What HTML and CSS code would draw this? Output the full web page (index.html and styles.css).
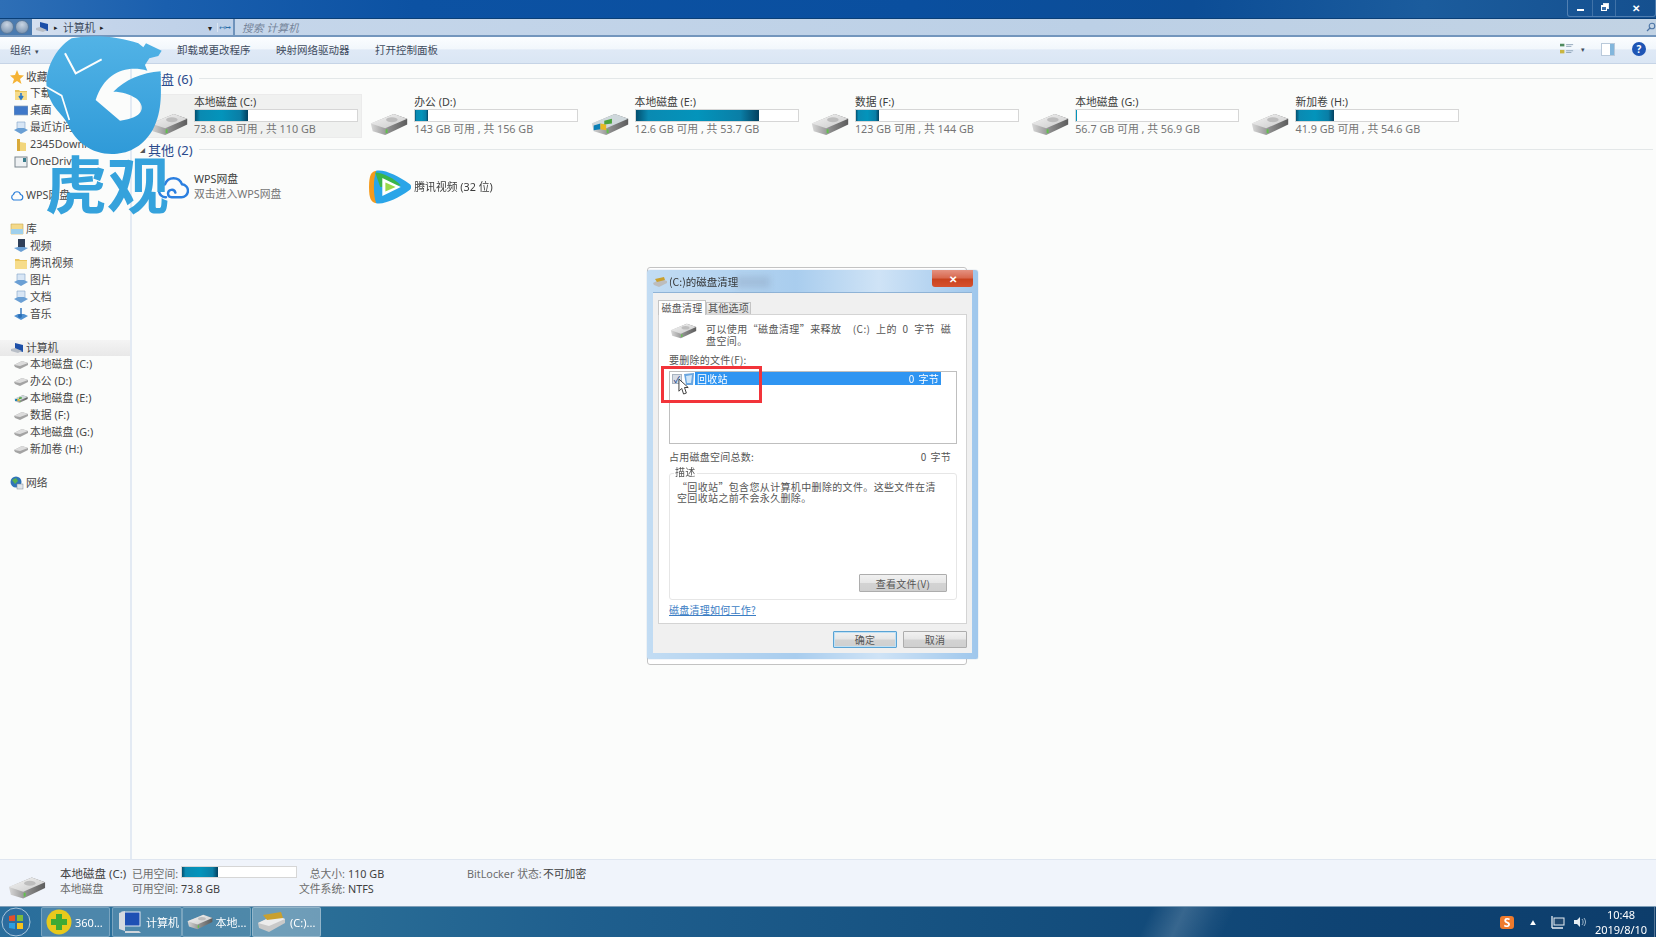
FILE: index.html
```html
<!DOCTYPE html>
<html lang="zh">
<head>
<meta charset="utf-8">
<title>计算机</title>
<link rel="stylesheet" href="styles.css">
</head>
<body>
<svg class="defs" width="0" height="0">
  <defs>
    <linearGradient id="hdTop" x1="0" y1="0" x2="1" y2="1"><stop offset="0" stop-color="#f4f4f4"/><stop offset="1" stop-color="#c9c9c9"/></linearGradient>
    <linearGradient id="hdSide" x1="0" y1="0" x2="1" y2="0"><stop offset="0" stop-color="#d8d8d8"/><stop offset=".5" stop-color="#8d8d8d"/><stop offset="1" stop-color="#5c5c5c"/></linearGradient>
    <linearGradient id="logoG" x1="0" y1="0" x2="0" y2="1"><stop offset="0" stop-color="#52b3e6"/><stop offset="1" stop-color="#2f9ad8"/></linearGradient>
    <symbol id="hd" viewBox="0 0 40 24">
      <path d="M1 11 L25 1 L39 6 L39 12 L16 23 L3 19 Z" fill="url(#hdSide)"/>
      <path d="M1 11 L25 1 L39 6 L16 16 Z" fill="url(#hdTop)"/>
      <ellipse cx="23" cy="7" rx="6" ry="2.6" fill="#bdbdbd"/>
      <rect x="16.5" y="17" width="2" height="4" fill="#5fc24a"/>
    </symbol>
    <symbol id="hdwin" viewBox="0 0 40 24">
      <path d="M1 11 L25 1 L39 6 L39 12 L16 23 L3 19 Z" fill="url(#hdSide)"/>
      <path d="M1 11 L25 1 L39 6 L16 16 Z" fill="#cfd8dc"/>
      <path d="M3 13 L10 11 L10 17 L3 18Z" fill="#0b7fb5"/>
      <path d="M10 11 L16 12 L16 18 L10 17Z" fill="#e8b923"/>
      <path d="M14 8 L22 6 L22 11 L14 12Z" fill="#4aa33d"/>
      <rect x="16.5" y="17" width="2" height="4" fill="#5fc24a"/>
    </symbol>
    <symbol id="folder" viewBox="0 0 14 14"><path d="M1 3h4l1 1h7v9H1z" fill="#e9c45c"/><path d="M1 5h12v8H1z" fill="#f6dc8a"/></symbol>
    <symbol id="minihd" viewBox="0 0 14 10"><path d="M0 5 L8 1 L14 3 L14 5 L6 9 L1 7Z" fill="#a3a3a3"/><path d="M0 5 L8 1 L14 3 L6 6Z" fill="#dcdcdc"/></symbol>
    <symbol id="pc" viewBox="0 0 14 14"><path d="M5 2 L13 4 L13 11 L5 9Z" fill="#1c4fa8"/><path d="M1 8 L5 7 L12 10 L8 12 L1 10Z" fill="#b8bec6"/></symbol>
    <symbol id="libdoc" viewBox="0 0 14 14"><path d="M3 1h8v8H3z" fill="#d8e6f5" stroke="#7fa3c7" stroke-width=".6"/><path d="M0 9 L7 13 L14 9 L10 7 L4 7Z" fill="#6a9fd4"/></symbol>
  </defs>
</svg>

<div class="screen">
  <header class="titlebar">
    <div class="caption">
      <span class="cap-btn cap-min"><i></i></span>
      <span class="cap-btn cap-max"><i></i></span>
      <span class="cap-btn cap-close">✕</span>
    </div>
  </header>

  <div class="addressbar">
    <div class="navbtns"><i></i><i></i></div>
    <div class="address">
      <svg class="icon14" viewBox="0 0 14 14"><use href="#pc"/></svg>
      <span class="arrow">▸</span><span>计算机</span><span class="arrow">▸</span>
      <span class="addr-drop">▾</span><span class="addr-ref">↤↦</span>
    </div>
    <div class="search">
      <span>搜索 计算机</span>
      <svg class="search-ic" viewBox="0 0 10 10"><circle cx="6" cy="4" r="2.8" fill="none" stroke="#4e76a6" stroke-width="1.1"/><path d="M4 6 L1 9" stroke="#4e76a6" stroke-width="1.3"/></svg>
    </div>
  </div>

  <div class="toolbar">
    <span class="tb-item tb-org">组织<b>▾</b></span>
    <span class="tb-item tb-sys">系统属性</span>
    <span class="tb-item tb-a">卸载或更改程序</span>
    <span class="tb-item tb-b">映射网络驱动器</span>
    <span class="tb-item tb-c">打开控制面板</span>
    <span class="tb-right">
      <svg class="tb-view" viewBox="0 0 16 12"><rect x="0" y="0" width="5" height="3" fill="#4f8a5f"/><rect x="0" y="7" width="5" height="4" fill="#c9b640"/><path d="M7 1h8M7 3h6M7 8h8M7 10h6" stroke="#8aa0b6"/></svg>
      <b class="tb-caret">▾</b>
      <span class="tb-pane"></span>
      <span class="tb-help">?</span>
    </span>
  </div>

  <div class="explorer">
    <nav class="sidebar">
      <ul class="navgroup">
        <li class="nav-head"><svg class="icon14" viewBox="0 0 14 14"><path d="M7 0 L9 5 L14 5.5 L10 9 L11.5 14 L7 11 L2.5 14 L4 9 L0 5.5 L5 5Z" fill="#f5b335"/></svg>收藏夹</li>
        <li class="nav-child"><svg class="icon14" viewBox="0 0 14 14"><use href="#folder"/><path d="M7 6v5M5 9l2 3 2-3" stroke="#2a78c8" stroke-width="1.6" fill="none"/></svg>下载</li>
        <li class="nav-child"><svg class="icon14" viewBox="0 0 14 14"><rect x="0" y="2" width="14" height="9" fill="#3f78c9" stroke="#8aa0b8" stroke-width=".7"/></svg>桌面</li>
        <li class="nav-child"><svg class="icon14" viewBox="0 0 14 14"><use href="#libdoc"/></svg>最近访问的位置</li>
        <li class="nav-child"><svg class="icon14" viewBox="0 0 14 14"><path d="M3 1h3v12H3z" fill="#d9aa3a"/><path d="M6 4l6 1v8H6z" fill="#f2d67c"/></svg>2345Downloads</li>
        <li class="nav-child"><svg class="icon14" viewBox="0 0 14 14"><rect x="1" y="2" width="12" height="10" fill="#eef1f3" stroke="#7b858e"/><rect x="9" y="3" width="3" height="4" fill="#3a7d8c"/></svg>OneDrive</li>
      </ul>
      <ul class="navgroup">
        <li class="nav-head"><svg class="icon14" viewBox="0 0 14 14"><path d="M3.5 11 A3 3 0 0 1 3.5 5.5 A3.6 3.6 0 0 1 10.5 5.5 A2.8 2.8 0 0 1 10.5 11 Z" fill="none" stroke="#2b7fd9" stroke-width="1.2"/></svg>WPS网盘</li>
      </ul>
      <ul class="navgroup">
        <li class="nav-head"><svg class="icon14" viewBox="0 0 14 14"><path d="M1 2h12v10H1z" fill="#f3d98a" stroke="#c9a94f" stroke-width=".6"/><path d="M1 7h12v5H1z" fill="#9fd0ec"/></svg>库</li>
        <li class="nav-child"><svg class="icon14" viewBox="0 0 14 14"><rect x="4" y="0" width="7" height="9" fill="#2f3f58"/><path d="M0 9 L7 13 L14 9 L10 8 L4 8Z" fill="#6a9fd4"/></svg>视频</li>
        <li class="nav-child"><svg class="icon14" viewBox="0 0 14 14"><use href="#folder"/></svg>腾讯视频</li>
        <li class="nav-child"><svg class="icon14" viewBox="0 0 14 14"><use href="#libdoc"/></svg>图片</li>
        <li class="nav-child"><svg class="icon14" viewBox="0 0 14 14"><use href="#libdoc"/></svg>文档</li>
        <li class="nav-child"><svg class="icon14" viewBox="0 0 14 14"><path d="M0 9 L7 13 L14 9 L10 7 L4 7Z" fill="#4f90d0"/><path d="M7 1v8" stroke="#2a6fb8" stroke-width="1.4"/><circle cx="6" cy="9" r="2" fill="#2a6fb8"/></svg>音乐</li>
      </ul>
      <ul class="navgroup">
        <li class="nav-head nav-current"><svg class="icon14" viewBox="0 0 14 14"><use href="#pc"/></svg>计算机</li>
        <li class="nav-child"><svg class="icon14" viewBox="0 0 14 10"><use href="#minihd"/></svg>本地磁盘 (C:)</li>
        <li class="nav-child"><svg class="icon14" viewBox="0 0 14 10"><use href="#minihd"/></svg>办公 (D:)</li>
        <li class="nav-child"><svg class="icon14" viewBox="0 0 14 14"><use href="#hdwin"/></svg>本地磁盘 (E:)</li>
        <li class="nav-child"><svg class="icon14" viewBox="0 0 14 10"><use href="#minihd"/></svg>数据 (F:)</li>
        <li class="nav-child"><svg class="icon14" viewBox="0 0 14 10"><use href="#minihd"/></svg>本地磁盘 (G:)</li>
        <li class="nav-child"><svg class="icon14" viewBox="0 0 14 10"><use href="#minihd"/></svg>新加卷 (H:)</li>
      </ul>
      <ul class="navgroup">
        <li class="nav-head"><svg class="icon14" viewBox="0 0 14 14"><circle cx="6" cy="6" r="5.5" fill="#2f74b8"/><path d="M2 4 L6 2 L8 5 L5 8Z" fill="#58b04f"/><rect x="7" y="8" width="6" height="5" fill="#dfe5ea" stroke="#7d8894" stroke-width=".5"/></svg>网络</li>
      </ul>
    </nav>

    <main class="content">
      <section class="group">
        <h2 class="group-head"><span class="tri">◢</span><span>硬盘 (6)</span><i></i></h2>
        <div class="tiles">
          <div class="tile tile-sel">
            <svg class="hd"><use href="#hd"/></svg>
            <div class="tile-text"><div class="t-name">本地磁盘 (C:)</div><div class="bar"><div class="fill" style="width:33%"></div></div><div class="t-sub">73.8 GB 可用 , 共 110 GB</div></div>
          </div>
          <div class="tile">
            <svg class="hd"><use href="#hd"/></svg>
            <div class="tile-text"><div class="t-name">办公 (D:)</div><div class="bar"><div class="fill" style="width:8%"></div></div><div class="t-sub">143 GB 可用 , 共 156 GB</div></div>
          </div>
          <div class="tile">
            <svg class="hd"><use href="#hdwin"/></svg>
            <div class="tile-text"><div class="t-name">本地磁盘 (E:)</div><div class="bar"><div class="fill" style="width:76%"></div></div><div class="t-sub">12.6 GB 可用 , 共 53.7 GB</div></div>
          </div>
          <div class="tile">
            <svg class="hd"><use href="#hd"/></svg>
            <div class="tile-text"><div class="t-name">数据 (F:)</div><div class="bar"><div class="fill" style="width:14%"></div></div><div class="t-sub">123 GB 可用 , 共 144 GB</div></div>
          </div>
          <div class="tile">
            <svg class="hd"><use href="#hd"/></svg>
            <div class="tile-text"><div class="t-name">本地磁盘 (G:)</div><div class="bar"><div class="fill" style="width:0.4%"></div></div><div class="t-sub">56.7 GB 可用 , 共 56.9 GB</div></div>
          </div>
          <div class="tile">
            <svg class="hd"><use href="#hd"/></svg>
            <div class="tile-text"><div class="t-name">新加卷 (H:)</div><div class="bar"><div class="fill" style="width:23%"></div></div><div class="t-sub">41.9 GB 可用 , 共 54.6 GB</div></div>
          </div>
        </div>
      </section>
      <section class="group group-other">
        <h2 class="group-head"><span class="tri">◢</span><span>其他 (2)</span><i></i></h2>
        <div class="tiles">
          <div class="tile tile-app">
            <svg class="app-cloud" viewBox="0 0 32 30"><path d="M8 26 A7 7 0 0 1 7 12 A9.5 9.5 0 0 1 25 12 A7 7 0 0 1 24 26 H14 A4 4 0 1 1 18 21" fill="none" stroke="#2b7fe0" stroke-width="2.6" stroke-linecap="round"/></svg>
            <div class="tile-text"><div class="t-name">WPS网盘</div><div class="t-sub">双击进入WPS网盘</div></div>
          </div>
          <div class="tile tile-app tile-tx">
            <svg class="app-tx" viewBox="0 0 42 42" preserveAspectRatio="none"><path d="M8 3 C3 4 1 8 1 21 C1 34 3 38 8 39 L16 21Z" fill="#f59a1c"/><path d="M8 3 C16 1 30 9 40 17 C43 19 43 23 40 25 C30 33 16 41 8 39 C5 30 5 12 8 3Z" fill="#2aa5e8"/><path d="M7 5 C14 5 26 12 32 19 L12 21Z" fill="#39b54a"/><path d="M14 11 L32 21 L14 31Z" fill="#fff"/><path d="M17 16 L27 21 L17 26Z" fill="#9ad84a"/></svg>
            <div class="t-name">腾讯视频 (32 位)</div>
          </div>
        </div>
      </section>
    </main>
  </div>

  <div class="details">
    <svg class="details-hd"><use href="#hd"/></svg>
    <div class="d-col d-name"><div class="d-dark d-title">本地磁盘 (C:)</div><div>本地磁盘</div></div>
    <div class="d-col d-used"><div>已用空间:</div><div>可用空间:</div></div>
    <div class="d-col d-usedv"><div class="bar bar-d"><div class="fill" style="width:32%"></div></div><div class="d-dark">73.8 GB</div></div>
    <div class="d-col d-size"><div>总大小:</div><div>文件系统:</div></div>
    <div class="d-col d-sizev d-dark"><div>110 GB</div><div>NTFS</div></div>
    <div class="d-col d-bl"><div>BitLocker 状态:</div></div>
    <div class="d-col d-dark"><div>不可加密</div></div>
  </div>

  <footer class="taskbar">
    <svg class="orb" viewBox="0 0 30 30">
      <circle cx="15" cy="15" r="14" fill="#2c6c9e" stroke="#a9c6dc" stroke-width="1"/>
      <path d="M8 9 L14 8 L14 14 L8 14Z" fill="#e2502b"/><path d="M16 8 L22 8 L22 14 L16 14Z" fill="#7dbb3c"/><path d="M8 16 L14 16 L14 22 L8 21Z" fill="#2c9ee0"/><path d="M16 16 L22 16 L22 22 L16 22Z" fill="#f6c21c"/>
    </svg>
    <div class="task task-1">
      <svg class="task-ic" viewBox="0 0 26 26"><circle cx="13" cy="13" r="12.5" fill="#e8c91c"/><path d="M10 5h6v5h5v6h-5v5h-6v-5H5v-6h5z" fill="#3eaa35"/></svg><span>360...</span>
    </div>
    <div class="task-pair">
      <div class="task task-2">
        <svg class="task-ic" viewBox="0 0 26 26"><rect x="5" y="3" width="18" height="14" fill="#1e50b4" stroke="#dfe6ee"/><path d="M2 4 L8 2 L8 22 L2 20Z" fill="#d5dae0"/><path d="M8 22h14l2 2H8z" fill="#cfd5db"/></svg><span>计算机</span>
      </div>
      <div class="task task-2">
        <svg class="task-hd"><use href="#hd"/></svg><span>本地...</span>
      </div>
    </div>
    <div class="task task-3">
      <svg class="task-ic task-ic-w" viewBox="0 0 30 24"><path d="M1 13 L18 5 L28 9 L28 13 L12 22 L2 18Z" fill="#c9c9c9"/><path d="M1 13 L18 5 L28 9 L12 16Z" fill="#ececec"/><path d="M6 5 L24 2 L26 8 L10 10Z" fill="#c9a02f"/></svg><span>(C:)...</span>
    </div>
    <div class="tray">
      <span class="tray-s">S</span>
      <span class="tray-up">▲</span>
      <svg class="tray-net" viewBox="0 0 14 14"><rect x="3" y="3" width="10" height="7" fill="#20486f" stroke="#e6edf3"/><path d="M1 1v12M1 13h11" stroke="#e6edf3" stroke-width="1.3"/></svg>
      <svg class="tray-vol" viewBox="0 0 14 14"><path d="M1 5h3l3-3v10L4 9H1z" fill="#e6edf3"/><path d="M9 4 C10.5 6 10.5 8 9 10M11 3 C13 6 13 8 11 11" stroke="#9fb6ca" fill="none"/></svg>
      <div class="clock"><div>10:48</div><div>2019/8/10</div></div>
      <span class="show-desktop"></span>
    </div>
  </footer>

  <div class="back-frame"></div>

  <section class="dialog">
    <div class="dlg-title">
      <svg class="dlg-ic" viewBox="0 0 14 12"><path d="M0 7 L8 3 L14 5 L14 7 L6 11 L1 9Z" fill="#bdbdbd"/><path d="M2 3 L11 1 L12 4 L4 6Z" fill="#c9a02f"/></svg>
      <span>(C:)的磁盘清理</span>
      <span class="dlg-smear"></span>
      <span class="dlg-close">✕</span>
    </div>
    <div class="dlg-frame">
      <div class="tabs"><span class="tab tab-on">磁盘清理</span><span class="tab">其他选项</span></div>
      <div class="panel">
        <div class="intro">
          <svg class="intro-hd"><use href="#hd"/></svg>
          <p>可以使用“磁盘清理”来释放 &nbsp;(C:) 上的 0 字节 磁<br>盘空间。</p>
        </div>
        <div class="lbl lbl-files">要删除的文件(F):</div>
        <div class="list">
          <div class="row">
            <span class="check">✓</span>
            <svg class="bin" viewBox="0 0 12 14"><path d="M1 2 L11 1 L10 13 L3 13Z" fill="#6aa6e0"/><path d="M3 4 L9 3 L8 11 L4 11Z" fill="#cfe5f8"/></svg>
            <div class="sel"><span>回收站</span><span>0 字节</span></div>
          </div>
          <div class="redbox"></div>
          <svg class="cursor" viewBox="0 0 14 20"><path d="M1 1 L1 14 L4 11 L6 17 L9 16 L7 10 L11 10Z" fill="#fff" stroke="#333" stroke-width="1"/></svg>
        </div>
        <div class="lbl lbl-total"><span>占用磁盘空间总数:</span><span>0 字节</span></div>
        <fieldset class="desc">
          <span class="legend">描述</span>
          <p>“回收站”包含您从计算机中删除的文件。这些文件在清<br>空回收站之前不会永久删除。</p>
          <span class="btn btn-view">查看文件(V)</span>
        </fieldset>
        <a class="howto">磁盘清理如何工作?</a>
      </div>
      <div class="dlg-actions"><span class="btn btn-act btn-def">确定</span><span class="btn btn-act">取消</span></div>
    </div>
  </section>

  <div class="logo">
    <svg class="logo-mark" viewBox="0 0 510 585">
      <path fill="url(#logoG)" d="M125 25 C190 12 270 20 325 40 L340 52 L348 40 L395 62 L385 78 L358 85 L345 105 L352 122 C290 105 225 125 197 210 L270 272 C340 265 350 230 318 205 C300 192 275 185 250 185 C285 150 335 128 392 124 C392 180 400 240 368 300 C335 355 290 372 245 372 C185 372 135 335 115 285 C95 245 60 235 50 170 C45 120 75 55 125 25 Z"/>
      <path d="M105 70 L137 130 L215 88" fill="none" stroke="#fbfdfd" stroke-width="6"/>
      <path d="M48 170 L95 197 L118 270" fill="none" stroke="#fbfdfd" stroke-width="5"/>
    </svg>
    <span class="logo-text">虎观</span>
  </div>
</div>
</body>
</html>
```

FILE: styles.css
```css
* { box-sizing: border-box; }
html, body { margin: 0; padding: 0; }
body { width: 1656px; height: 937px; overflow: hidden; background: #fff; }
.defs { position: absolute; }
ul { list-style: none; margin: 0; padding: 0; }
p, h2 { margin: 0; }

.screen {
  position: relative;
  width: 1656px;
  height: 937px;
  display: flex;
  flex-direction: column;
  font-family: "Noto Sans", "Noto Sans CJK SC", sans-serif;
  font-size: 10.8px;
  color: #444;
  filter: blur(.45px);
  overflow: hidden;
}

/* window chrome */
.titlebar {
  height: 19px;
  flex: none;
  display: flex;
  justify-content: flex-end;
  background: linear-gradient(90deg, #2e6fb6 0, #1a5fae 10%, #0c52a3 25%, #0a4f9f 55%, #0c4d96 72%, #1b5c9d 86%, #15508f 100%);
  border-bottom: 1px solid #0a3f77;
}
.caption {
  width: 89px;
  height: 17px;
  display: flex;
  border: 1px solid rgba(190, 210, 235, .35);
  border-top: 0;
  border-radius: 0 0 3px 3px;
}
.cap-btn {
  display: flex;
  align-items: center;
  justify-content: center;
  color: #fff;
  font-size: 10px;
  font-weight: 700;
  border-right: 1px solid rgba(190, 210, 235, .25);
}
.cap-min { width: 25px; }
.cap-max { width: 23px; }
.cap-close { flex: 1; border-right: 0; }
.cap-min i { width: 7px; height: 2px; margin-top: 4px; background: #fff; }
.cap-max i { width: 6px; height: 6px; border: 1px solid #fff; border-top-width: 2px; box-shadow: 2px -2px 0 -1px #fff, 2px -2px 0 0 #dfe8f2; background: #3a6ea8; }

.addressbar {
  height: 18px;
  flex: none;
  display: flex;
  align-items: stretch;
  background: #bdd1e7;
  border-bottom: 2px solid #7396bd;
}
.navbtns {
  width: 32px;
  flex: none;
  display: flex;
  gap: 1px;
  align-items: center;
  background: #4a7bb0;
}
.navbtns i {
  width: 14px;
  height: 14px;
  border-radius: 50%;
  background: radial-gradient(circle at 50% 30%, #c9d5e3, #6f8aa8);
  border: 1px solid #5b7a9c;
}
.address {
  width: 201px;
  flex: none;
  display: flex;
  align-items: center;
  gap: 5px;
  padding-left: 3px;
  color: #3c4a5c;
  background: linear-gradient(90deg, #d5e0ef, #c3d4ea 40%, #bdd0e8);
}
.arrow { font-size: 7px; color: #222; }
.addr-drop { margin-left: auto; font-size: 8px; color: #222; }
.addr-ref { width: 16px; padding-left: 1px; font-size: 7px; color: #2a6ea8; border-left: 1px solid #dbe5f1; white-space: nowrap; overflow: hidden; }
.search {
  flex: 1;
  display: flex;
  align-items: center;
  justify-content: space-between;
  padding: 0 0 0 7px;
  border-left: 2px solid #6f93bb;
  font-style: italic;
  color: #76859a;
  background: linear-gradient(90deg, #c5d6ea, #bcd0e6 60%, #c2d3e4);
}
.search-ic { width: 10px; height: 10px; }

.toolbar {
  height: 27px;
  flex: none;
  display: flex;
  align-items: center;
  padding-bottom: 2px;
  background: linear-gradient(180deg, #fbfdff 0, #f2f7fc 45%, #dfe9f6 50%, #dae6f4 100%);
  border-bottom: 1px solid #c6d4e6;
  color: #3f4c5e;
}
.tb-item { font-size: 10.5px; white-space: nowrap; }
.tb-org { margin-left: 10px; width: 52px; }
.tb-org b { font-size: 7px; margin-left: 4px; font-weight: 400; }
.tb-sys { width: 115px; }
.tb-a { width: 99px; }
.tb-b { width: 99px; }
.tb-right { margin-left: auto; display: flex; align-items: center; }
.tb-view { width: 14px; height: 12px; }
.tb-caret { margin: 0 16px 0 7px; font-size: 7px; font-weight: 400; }
.tb-pane { width: 14px; height: 13px; margin-right: 17px; background: linear-gradient(90deg, #fff 65%, #82b6dc 65%); border: 1px solid #b9c9da; }
.tb-help {
  width: 14px;
  height: 14px;
  margin-right: 10px;
  border-radius: 50%;
  background: #1e55b5;
  color: #fff;
  font-size: 10px;
  font-weight: 700;
  line-height: 14px;
  text-align: center;
}

/* explorer body */
.explorer { flex: 1; min-height: 0; display: flex; background: #fbfcfb; }
.sidebar { width: 132px; flex: none; padding-top: 4.5px; border-right: 2px solid #e3eaf3; }
.navgroup { margin-bottom: 16.95px; }
.navgroup li { height: 16.95px; display: flex; align-items: center; gap: 2px; white-space: nowrap; line-height: 16.95px; color: #474747; }
.icon14 { width: 14px; height: 14px; flex: none; }
.nav-head { padding-left: 10px; }
.nav-child { padding-left: 14px; }
.nav-current { background: linear-gradient(180deg, #f4f4f4, #e8e8e8); }

.content { flex: 1; min-width: 0; padding: 6px 3px 0 8px; }
.group-head {
  height: 16px;
  display: flex;
  align-items: center;
  font-size: 13px;
  font-weight: 400;
  color: #2a4a8c;
  white-space: nowrap;
}
.tri { width: 8px; font-size: 5px; color: #555; }
.group-head i { flex: 1; height: 1px; margin-left: 6px; background: #e3e7e8; }
.tiles { display: grid; grid-template-columns: repeat(6, 220.3px); margin-top: 8px; }
.group-other { margin-top: 3px; }
.group-other .tiles { margin-top: 9px; }
.tile { height: 44px; display: flex; gap: 5px; padding-left: 8px; border: 1px solid transparent; }
.tile-sel { background: #f0f1f0; border-color: #ebebeb; margin-right: -2px; }
.hd { width: 40px; height: 23px; margin-top: 18px; flex: none; }
.tile-text { display: flex; flex-direction: column; }
.t-name { height: 14px; line-height: 14px; color: #3c3c3c; white-space: nowrap; }
.t-sub { height: 14px; line-height: 14px; color: #757575; white-space: nowrap; }
.bar { width: 164px; height: 13px; background: #fff; border: 1px solid #d6d6d6; }
.fill { height: 100%; background: linear-gradient(90deg, #024f6f 0, #0a8ab2 10%, #0394bb 50%, #0a7ea6 85%, #03405f 100%); }

.tile-app { padding-left: 17px; }
.app-cloud { width: 31px; height: 28px; margin-top: 6px; flex: none; }
.tile-app .tile-text { margin-top: 5px; gap: 1px; }
.tile-tx { padding-left: 7px; align-items: center; gap: 3px; margin-top: -1px; }
.tile-tx .t-name { height: auto; }
.app-tx { width: 43px; height: 38px; flex: none; }

/* details pane */
.details {
  height: 47px;
  flex: none;
  position: relative;
  display: flex;
  padding: 6px 0 0 60px;
  background: #f0f4fb;
  border-top: 1px solid #dfe6f0;
  color: #6c6c6c;
}
.details-hd { width: 38px; height: 24px; position: absolute; left: 8px; top: 16px; }
.d-col > div { height: 15px; line-height: 15px; white-space: nowrap; }
.d-dark { color: #3f3f3f; }
.d-title { font-size: 11.5px; }
.d-name { width: 72px; }
.d-used { width: 49px; }
.d-usedv { width: 118px; }
.d-size { width: 49px; padding-right: 3px; text-align: right; }
.d-sizev { width: 119px; }
.d-bl { width: 76px; }
.d-usedv .bar-d { width: 116px; height: 12px; margin-bottom: 3px; }

/* taskbar */
.taskbar {
  height: 31px;
  flex: none;
  display: flex;
  align-items: stretch;
  color: #fff;
  background:
    linear-gradient(115deg, transparent 0, transparent 69%, rgba(255, 255, 255, .16) 71%, rgba(255, 255, 255, .04) 73%, transparent 74%),
    linear-gradient(90deg, #2a6e9c 0, #2d7299 15%, #1f5f8e 35%, #15507f 60%, #0f4474 80%, #0d3d6b 100%);
  border-top: 1px solid #7f9eb8;
}
.orb { width: 30px; height: 30px; margin: 0 10px 0 1px; flex: none; }
.task { display: flex; align-items: center; gap: 3px; padding-left: 4px; border: 1px solid rgba(255, 255, 255, .25); border-radius: 2px; background: rgba(255, 255, 255, .16); font-size: 11px; white-space: nowrap; }
.task-1 { width: 69px; margin-right: 2px; }
.task-pair { display: flex; width: 139px; margin-right: 1px; }
.task-2 { width: 69.5px; }
.task-3 { width: 69px; background: rgba(255, 255, 255, .32); }
.task-ic { width: 26px; height: 26px; flex: none; }
.task-ic-w { width: 30px; height: 24px; }
.task-hd { width: 26px; height: 16px; flex: none; }
.tray { margin-left: auto; display: flex; align-items: center; }
.tray-s {
  width: 14px;
  height: 13px;
  margin-right: 16px;
  border-radius: 3px;
  background: #ee7a2d;
  color: #fff;
  font-size: 12px;
  font-weight: 700;
  line-height: 13px;
  text-align: center;
}
.tray-up { width: 10px; margin-right: 11px; font-size: 6px; }
.tray-net { width: 14px; height: 14px; margin-right: 8px; }
.tray-vol { width: 14px; height: 14px; margin-right: 1px; }
.clock { width: 66px; text-align: center; line-height: 15px; font-size: 11px; }
.show-desktop { width: 2px; align-self: stretch; border-left: 1px solid rgba(255, 255, 255, .3); }

/* dialog floats over the desktop */
.back-frame {
  position: absolute;
  left: 647px;
  top: 267px;
  width: 320px;
  height: 398px;
  background: #fff;
  border: 1px solid #c3c3c3;
  border-radius: 3px;
}
.dialog {
  position: absolute;
  left: 647px;
  top: 270px;
  width: 331px;
  height: 389px;
  display: flex;
  flex-direction: column;
  background: linear-gradient(90deg, #c2dcf3 0, #a9cdee 45%, #cfe3f6 70%, #9fc7ec 100%);
  border-radius: 3px 3px 2px 2px;
  box-shadow: 0 0 1px #7c9cc0;
  color: #555;
  font-family: "Noto Sans CJK SC", sans-serif;
  font-size: 10px;
  letter-spacing: .25px;
  word-spacing: 1.5px;
}
.dlg-title { height: 22px; flex: none; position: relative; display: flex; align-items: center; padding: 1px 0 0 6px; gap: 2px; color: #333; font-size: 10.5px; letter-spacing: 0; }
.dlg-ic { width: 14px; height: 12px; }
.dlg-smear { width: 34px; height: 12px; margin-left: -4px; background: rgba(130, 150, 175, .3); filter: blur(3px); }
.dlg-close {
  position: absolute;
  left: 285px;
  top: 0;
  width: 41px;
  height: 17px;
  display: flex;
  align-items: center;
  justify-content: center;
  border-radius: 0 0 3px 3px;
  background: linear-gradient(180deg, #e49281 0, #d96a50 45%, #c9431f 55%, #d6512e 100%);
  color: #fff;
  font-size: 10px;
  font-weight: 700;
}
.dlg-frame { flex: 1; margin: 0 6px 6px 6px; padding: 7px 5px 0; background: #f0f0f0; border-top: 1px solid #8fb3d6; }
.tabs { height: 14px; display: flex; align-items: flex-end; }
.tab { height: 12px; width: 45px; line-height: 10px; text-align: center; background: linear-gradient(180deg, #f2f2f2, #dcdcdc); border: 1px solid #c4c4c4; border-bottom: 0; }
.tab-on { height: 15px; width: 48px; line-height: 14px; background: #fff; position: relative; z-index: 1; margin-bottom: -1px; }
.panel { height: 310px; padding: 8px 9px 0 10px; background: #fff; border: 1px solid #d4d4d4; }
.intro { display: flex; height: 24px; line-height: 12px; }
.intro-hd { width: 27px; height: 16px; flex: none; margin: 0 9px 0 1px; }
.intro p { white-space: nowrap; letter-spacing: .42px; word-spacing: 3px; }
.lbl { height: 14px; line-height: 14px; }
.lbl-files { margin-top: 6px; }
.list { position: relative; height: 73px; margin-top: 4px; border: 1px solid #bfbfbf; }
.row { display: flex; align-items: center; height: 13px; padding-left: 2px; }
.check { width: 10px; height: 10px; line-height: 10px; text-align: center; font-size: 9px; color: #123a80; background: #d7dde6; border: 1px solid #a9b3c0; }
.bin { width: 12px; height: 14px; margin: 0 0 0 1px; flex: none; }
.sel { flex: 1; height: 13px; margin-right: 15px; padding: 0 2px; display: flex; justify-content: space-between; line-height: 13px; color: #fff; background: #2f95f2; }
.redbox { position: absolute; left: -9px; top: -6px; width: 101px; height: 37px; border: 3px solid #f2343a; }
.cursor { position: absolute; left: 8px; top: 6px; width: 13px; height: 19px; }
.lbl-total { display: flex; justify-content: space-between; margin-top: 6px; padding: 0 6px 0 0; }
.desc { position: relative; height: 127px; margin: 9px 0 0; padding: 8px 7px 0; display: flex; flex-direction: column; border: 1px solid #e6e6e6; border-radius: 3px; }
.legend { position: absolute; left: 4px; top: -8px; padding: 0 1px; line-height: 11px; background: #fff; }
.desc p { line-height: 10.5px; white-space: nowrap; letter-spacing: .35px; }
.btn { display: flex; align-items: center; justify-content: center; background: linear-gradient(180deg, #f1f1f1 0, #e6e6e6 48%, #d3d3d3 52%, #cfcfcf 100%); border: 1px solid #adadad; border-radius: 1px; }
.btn-view { width: 88px; height: 18px; margin: auto 2px 7px auto; }
.howto { display: block; height: 14px; margin-top: 3px; line-height: 14px; color: #3b7dc4; text-decoration: underline; }
.dlg-actions { display: flex; justify-content: flex-end; gap: 6px; margin-top: 7px; }
.btn-act { width: 64px; height: 17px; }
.btn-def { border-color: #5aa3d4; box-shadow: inset 0 0 0 1px #bfe0f4; }

/* watermark logo */
.logo { position: absolute; left: 30px; top: 30px; width: 170px; height: 195px; }
.logo-mark { position: absolute; left: 0; top: 0; width: 170px; height: 195px; }
.logo-text {
  position: absolute;
  left: 15px;
  top: 116px;
  font-family: "Noto Sans CJK SC", sans-serif;
  font-size: 62px;
  font-weight: 700;
  line-height: 72px;
  color: #35a2dc;
  white-space: nowrap;
}
```
